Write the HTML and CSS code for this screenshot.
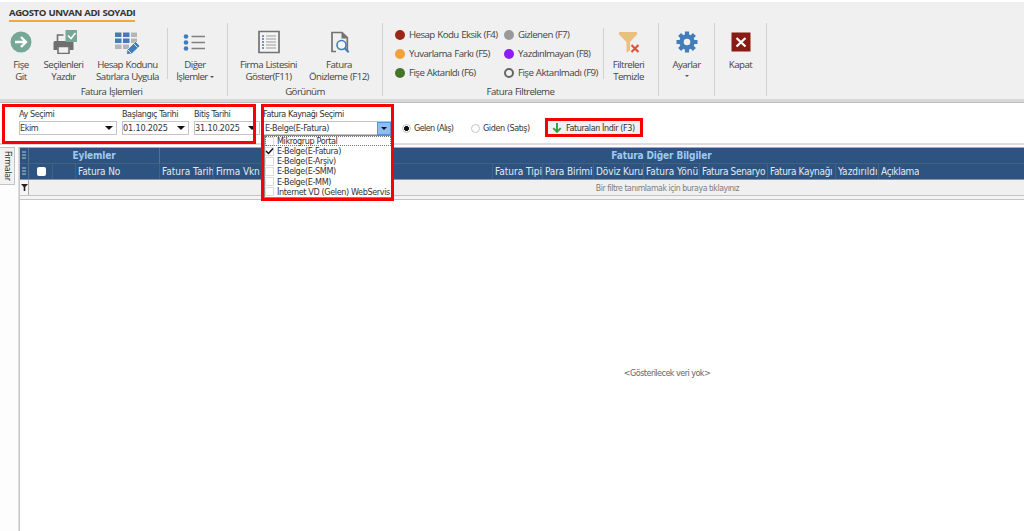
FILE: index.html
```html
<!DOCTYPE html>
<html lang="tr">
<head>
<meta charset="utf-8">
<title>Fatura İşlemleri</title>
<link rel="stylesheet" href="styles.css">
</head>
<body>
<header class="ribbon">
  <div class="tabs"><span class="tab">AGOSTO UNVAN ADI SOYADI</span></div>
  <div class="groups">
    <section class="group g-ops">
      <div class="items">
        <button class="btn w-fise"><svg class="ico" viewBox="0 0 24 24"><circle cx="12" cy="12" r="10.5" fill="#76a797"/><path d="M6 12h10M12 7l5 5-5 5" fill="none" stroke="#fff" stroke-width="2.4"/></svg><span>Fişe<br>Git</span></button>
        <button class="btn w-sec"><svg class="ico wide" viewBox="0 0 26 24"><path d="M6.500 11V5h6" fill="none" stroke="#707070" stroke-width="1.600"/><path d="M4 11h17q1.500 0 1.500 1.500V20h-4v-3H6.500v3h-4v-7.500Q2.500 11 4 11z" fill="#6f6f70"/><path d="M7 16.500h11v7H7z" fill="#f0f0f0" stroke="#707070" stroke-width="1.600"/><path d="M14.500 0H26v12H14.500z" fill="#76a797"/><path d="M17 5.500l3 3 4.500-5.500" fill="none" stroke="#fff" stroke-width="1.600"/></svg><span>Seçilenleri<br>Yazdır</span></button>
        <button class="btn w-hesap"><svg class="ico wide" viewBox="0 0 26 24"><path d="M0 2.500h6.500v4.500H0zM8 2.500h6.500v4.500H8zM0 8.500h6.500v4.500H0zM8 8.500h6.500v4.500H8z" fill="#437cba"/><path d="M16 2.500h6v4.500h-6zM16 8.500h6v4.500h-6zM0 14.500h6.500v4.500H0zM8 14.500h6v4.500H8z" fill="#b5b5b5"/><path d="M12 20l8.500-8.500 4.500 4.500-8.500 8-5 .5z" fill="#437cba" stroke="#f0f0f0" stroke-width=".8"/><path d="M18.500 13.500l4 4M12.500 19.500l4 4" stroke="#f0f0f0" stroke-width=".9"/></svg><span>Hesap Kodunu<br>Satırlara Uygula</span></button>
        <i class="sep"></i>
        <button class="btn w-diger"><svg class="ico" viewBox="0 0 24 24"><g fill="#437cba"><circle cx="3" cy="6.500" r="2.300"/><circle cx="3" cy="12.500" r="2.300"/><circle cx="3" cy="18.500" r="2.300"/></g><path d="M8.500 6.500H22M8.500 12.500H22M8.500 18.500H22" stroke="#808080" stroke-width="1.300"/></svg><span>Diğer<br>İşlemler<i class="caret side"></i></span></button>
      </div>
      <div class="caption">Fatura İşlemleri</div>
    </section>
    <section class="group g-view">
      <div class="items">
        <button class="btn w-firma"><svg class="ico" viewBox="0 0 24 24"><path d="M2 1.500h20v21H2z" fill="#f4f4f4" stroke="#727272" stroke-width="1.700"/><path d="M9 6h10M9 9h10M9 12h10M9 15h10M9 18h10" stroke="#999" stroke-width="1.200"/><path d="M5 6h2M5 9h2M5 12h2M5 15h2M5 18h2" stroke="#437cba" stroke-width="1.400"/></svg><span>Firma Listesini<br>Göster(F11)</span></button>
        <button class="btn w-oniz"><svg class="ico" viewBox="0 0 24 24"><path d="M9 21.500H5V2.500h10l5.300 5V20" fill="none" stroke="#727272" stroke-width="1.700"/><path d="M14.500 2l6.500 6.500h-6.500z" fill="#727272"/><circle cx="14.500" cy="15" r="4.500" fill="#f5f8fb" stroke="#437cba" stroke-width="1.600"/><path d="M17.700 18.200l4 4" stroke="#437cba" stroke-width="2"/></svg><span>Fatura<br>Önizleme (F12)</span></button>
      </div>
      <div class="caption">Görünüm</div>
    </section>
    <section class="group g-filter">
      <div class="items">
        <ul class="legend">
          <li><b class="dot red"></b>Hesap Kodu Eksik (F4)</li><li><b class="dot gray"></b>Gizlenen (F7)</li>
          <li><b class="dot orange"></b>Yuvarlama Farkı (F5)</li><li><b class="dot violet"></b>Yazdırılmayan (F8)</li>
          <li><b class="dot green"></b>Fişe Aktarıldı (F6)</li><li><b class="dot ring"></b>Fişe Aktarılmadı (F9)</li>
        </ul>
        <i class="sep"></i>
        <button class="btn w-filt"><svg class="ico" viewBox="0 0 24 24"><path d="M2 2h18v2.500L13 12v8.500L9.500 22.500V12L2 4.500z" fill="#e9c07e"/><path d="M14.500 15l7 7M21.500 15l-7 7" stroke="#d9583c" stroke-width="2.200"/></svg><span>Filtreleri<br>Temizle</span></button>
      </div>
      <div class="caption">Fatura Filtreleme</div>
    </section>
    <section class="group g-set">
      <div class="items">
        <button class="btn w-full"><svg class="ico" viewBox="0 0 24 24"><g stroke="#437cba" stroke-width="4.200"><path d="M12 1.500v21M1.500 12h21M4.600 4.600l14.800 14.800M19.400 4.600L4.600 19.400"/></g><circle cx="12" cy="12" r="7.700" fill="#437cba"/><circle cx="12" cy="12" r="3.300" fill="#f0f0f0"/></svg><span>Ayarlar</span><i class="caret below"></i></button>
      </div>
    </section>
    <section class="group g-close">
      <div class="items">
        <button class="btn w-full"><svg class="ico" viewBox="0 0 24 24"><path d="M2.500 2.500h19v19h-19z" fill="#8a1b12"/><path d="M7.500 8l9 8.500M16.500 8l-9 8.500" stroke="#fff" stroke-width="2.300"/></svg><span>Kapat</span></button>
      </div>
    </section>
  </div>
</header>

<form class="bar">
  <label class="field f-month"><span>Ay Seçimi</span><span class="input">Ekim<i class="arrow"></i></span></label>
  <label class="field f-start"><span>Başlangıç Tarihi</span><span class="input date">01.10.2025<i class="arrow"></i></span></label>
  <label class="field f-end"><span>Bitiş Tarihi</span><span class="input date">31.10.2025<i class="arrow"></i></span></label>
  <div class="field f-source"><span>Fatura Kaynağı Seçimi</span><span class="input combo">E-Belge(E-Fatura)<i class="drop"><i class="arrow"></i></i></span>
    <ul class="menu">
      <li class="hot"><i class="box"></i>Mikrogrup Portal</li>
      <li><i class="box"><svg viewBox="0 0 9 9"><path d="M1 4l2.500 2.500L8 1.500" fill="none" stroke="#111" stroke-width="1.500"/></svg></i>E-Belge(E-Fatura)</li>
      <li><i class="box"></i>E-Belge(E-Arşiv)</li>
      <li><i class="box"></i>E-Belge(E-SMM)</li>
      <li><i class="box"></i>E-Belge(E-MM)</li>
      <li><i class="box"></i>İnternet VD (Gelen) WebServis</li>
    </ul>
  </div>
  <label class="radio r-in"><i class="rb on"></i>Gelen (Alış)</label>
  <label class="radio r-out"><i class="rb"></i>Giden (Satış)</label>
  <button type="button" class="download"><svg viewBox="0 0 10 10"><path d="M5 0v9M1.300 5.200L5 8.900l3.700-3.700" fill="none" stroke="#2c9f45" stroke-width="1.900"/></svg>Faturaları İndir (F3)</button>
  <i class="mark mark-dates"></i>
  <i class="mark mark-source"></i>
</form>

<main class="work">
  <aside class="side"><span class="vtab">Firmalar</span></aside>
  <div class="grid">
    <div class="row bands"><span class="ind"><i></i></span><span class="band b1">Eylemler</span><span class="band b2">Fatura Diğer Bilgiler</span></div>
    <div class="row cols">
      <span class="ind"><i></i></span><span class="c c-chk"><i class="chk"></i></span><span class="c c-e"></span><span class="c c-no">Fatura No</span><span class="c c-tar">Fatura Tarih</span><span class="c c-vkn">Firma Vkn</span><span class="c c-tip">Fatura Tipi</span><span class="c c-par">Para Birimi</span><span class="c c-dov">Döviz Kuru</span><span class="c c-yon">Fatura Yönü</span><span class="c c-sen">Fatura Senaryo</span><span class="c c-kay">Fatura Kaynağı</span><span class="c c-yaz">Yazdırıldı</span><span class="c c-ack">Açıklama</span>
    </div>
    <div class="row filter"><span class="ind"><svg viewBox="0 0 7 7"><path d="M0 0h7L4.300 3v4H2.700V3z" fill="#222"/></svg></span><span class="hint">Bir filtre tanımlamak için buraya tıklayınız</span></div>
    <div class="strip"></div>
    <div class="empty">&lt;Gösterilecek veri yok&gt;</div>
  </div>
</main>
</body>
</html>
```
FILE: styles.css
```css
* { box-sizing: border-box; }
body { margin: 0; width: 1024px; height: 531px; overflow: hidden; display: flex; flex-direction: column; background: #fff; font: 9px/10px "DejaVu Sans Condensed", "DejaVu Sans", sans-serif; color: #333; white-space: nowrap; }
button { font: inherit; color: inherit; letter-spacing: inherit; word-spacing: inherit; border: 0; background: none; padding: 0; }
ul { list-style: none; margin: 0; padding: 0; }
i { font-style: normal; }

.ribbon { height: 103px; flex: none; border-top: 2px solid #fff; border-bottom: 1px solid #bfbfbf; background: linear-gradient(#f0f0f0 97px, #d8d8d8 97px); font: 9.7px/12px "Open Sans", "Noto Sans", sans-serif; letter-spacing: -.56px; word-spacing: .6px; color: #444; }
.tabs { height: 21px; padding: 3px 0 0 9px; }
.tab { display: inline-block; height: 17px; border-bottom: 2px solid #f0a83c; font-weight: 700; font-size: 9.600px; letter-spacing: -.48px; line-height: 15px; color: #333; }
.groups { display: flex; height: 73px; }
.group { border-right: 1px solid #d2d2d2; display: flex; flex-direction: column; }
.g-ops { width: 228px; }
.g-view { width: 155px; }
.g-filter { width: 276px; }
.g-set { width: 56px; }
.g-close { width: 52px; }
.items { display: flex; height: 62px; }
.sep { width: 1px; height: 51px; margin-top: 5px; background: #d2d2d2; }
.btn { display: flex; flex-direction: column; align-items: center; justify-content: flex-start; text-align: center; padding-top: 7px; height: 62px; }
.ico { display: block; width: 24px; height: 24px; margin-bottom: 5px; flex: none; }
.wide { width: 26px; }
.w-fise { width: 42px; }
.w-sec { width: 43px; }
.w-hesap { width: 82px; padding-left: 3px; }
.w-diger { width: 54px; }
.w-firma { width: 81px; }
.w-oniz { width: 60px; }
.w-filt { width: 49px; }
.w-full { width: 100%; }
.caret { display: inline-block; border: 2.5px solid transparent; border-top-color: #555; border-bottom: 0; vertical-align: middle; }
.side.caret { margin-left: 2px; }
.below { margin-top: 4px; }
.caption { height: 12px; line-height: 14px; text-align: center; }
.g-ops .caption { padding-right: 4px; }
.legend { width: 220px; padding: 2px 0 0 12px; display: grid; grid-template-columns: 109px 99px; grid-auto-rows: 19.3px; }
.legend li { display: flex; align-items: center; gap: 4px; }
.dot { width: 10px; height: 10px; border-radius: 50%; flex: none; }
.red { background: #9b2817; }
.gray { background: #999; }
.orange { background: #f2a03a; }
.violet { background: #8e1cf8; }
.green { background: #467429; }
.ring { border: 2px solid #666; }

.bar { position: relative; z-index: 2; height: 42px; flex: none; display: flex; align-items: flex-start; padding: 6px 0 0 19px; border-bottom: 2px solid #ddd; background: #fff; letter-spacing: -.43px; }
.field { display: flex; flex-direction: column; position: relative; line-height: 10px; gap: 2px; }
.f-month { width: 98px; margin-right: 5px; }
.f-start { width: 67px; margin-right: 5px; }
.f-end { width: 66px; margin-right: 3px; }
.f-source { width: 129px; margin-right: 10px; }
.input { display: flex; align-items: center; justify-content: space-between; height: 14px; border: 1px solid #c4c4c4; padding: 0 3px 0 0; line-height: 12px; background: #fff; }
.date { letter-spacing: -.15px; }
.arrow { width: 0; border: 4px solid transparent; border-top-color: #111; border-bottom: 0; }
.combo { padding-right: 0; padding-left: 1px; letter-spacing: -.37px; }
.drop { display: flex; align-items: center; justify-content: center; width: 14px; height: 13px; background: #8ebfee; border: 1px solid #5992cf; }
.drop .arrow { border-width: 3px; border-bottom: 0; }
.menu { position: absolute; left: 1px; top: 26px; width: 128px; height: 63px; background: #fff; border: 1px solid #888; overflow: hidden; letter-spacing: -.38px; }
.menu li { display: flex; align-items: center; gap: 3px; height: 10.150px; }
.hot { outline: 1px dotted #777; outline-offset: -1px; }
.box { width: 9px; height: 9px; border: 1px solid #ddd; flex: none; background: #fff; }
.box svg { display: block; width: 9px; height: 9px; margin: -1px; }
.radio { display: flex; align-items: center; gap: 3px; height: 10px; margin-top: 14px; }
.r-in { width: 69px; letter-spacing: -.62px; }
.r-out { width: 74px; }
.rb { width: 9px; height: 9px; border: 1px solid #c4c4c4; border-radius: 50%; flex: none; }
.rb.on { background: radial-gradient(circle, #111 2.200px, #fff 2.800px); }
.download { display: flex; align-items: center; gap: 4px; width: 98px; height: 19px; margin-top: 9px; border: 3px solid #f40000; padding-left: 4px; background: #f1f1f1; }
.download svg { width: 10px; height: 10px; }
.mark { position: absolute; border: 3px solid #fa0000; }
.mark-dates { left: 2px; top: 1px; width: 254px; height: 40px; }
.mark-source { left: 261px; top: 1px; width: 133px; height: 97px; }

.work { flex: 1; display: flex; padding-top: 2px; }
.side:not(.caret) { width: 19px; border-right: 1px solid #ddd; background: #fdfdfd; }
.vtab { display: block; writing-mode: vertical-rl; width: 15px; height: 38px; line-height: 13px; border: 1px solid #c4c4c4; border-left: 0; background: #f2f2f2; text-align: center; letter-spacing: -.4px; }
.grid { flex: 1; display: flex; flex-direction: column; border-left: 1px solid #c8c8c8; border-top: 1px solid #aaa; }
.row { display: flex; flex: none; }
.bands, .cols { background: #2d5480; color: #e2e9f1; font-size: 10px; letter-spacing: -.12px; }
.bands { height: 16px; line-height: 16px; border-bottom: 1px solid #46617f; font-weight: bold; color: #9fc9f2; }
.cols { height: 16px; line-height: 16px; border-bottom: 1px solid #8796a6; }
.ind { width: 9px; border-right: 1px solid #56718e; display: flex; justify-content: center; align-items: center; flex: none; }
.ind i { width: 4px; height: 9px; background: repeating-linear-gradient(#6f8fae 0 2px, transparent 2px 3px); }
.band { text-align: center; border-right: 1px solid #56718e; }
.b1 { width: 131px; }
.b2 { flex: 1; border: 0; padding-left: 139px; }
.c { border-right: 1px solid #46617f; padding-left: 2px; overflow: hidden; flex: none; }
.c-chk { width: 24px; display: flex; align-items: center; justify-content: center; padding-left: 1px; }
.chk { width: 9px; height: 9px; background: #fff; border-radius: 2px; }
.c-e { width: 23px; }
.c-no { width: 84px; }
.c-tar { width: 54px; letter-spacing: 0; }
.c-vkn { width: 279px; }
.c-tip { width: 50px; letter-spacing: 0; }
.c-par { width: 51px; }
.c-dov { width: 50px; }
.c-yon { width: 56px; letter-spacing: 0; }
.c-sen { width: 68px; letter-spacing: -.35px; }
.c-kay { width: 68px; letter-spacing: -.35px; }
.c-yaz { width: 43px; letter-spacing: 0; }
.c-ack { border: 0; letter-spacing: -.35px; }
.filter { height: 16px; background: #f0f0f0; border-bottom: 1px solid #c4c4c4; }
.filter .ind { border-color: #aaa; background: #f6f6f6; }
.filter svg { width: 7px; height: 7px; }
.hint { flex: 1; text-align: center; padding-left: 282px; line-height: 16px; color: #7e7e7e; font-size: 8.700px; letter-spacing: -.45px; }
.strip { height: 4px; border-bottom: 1px solid #c4c4c4; background: #f4f4f4; flex: none; }
.empty { flex: 1; display: flex; align-items: center; justify-content: center; padding: 14px 0 0 290px; color: #666; letter-spacing: -.55px; }
```
